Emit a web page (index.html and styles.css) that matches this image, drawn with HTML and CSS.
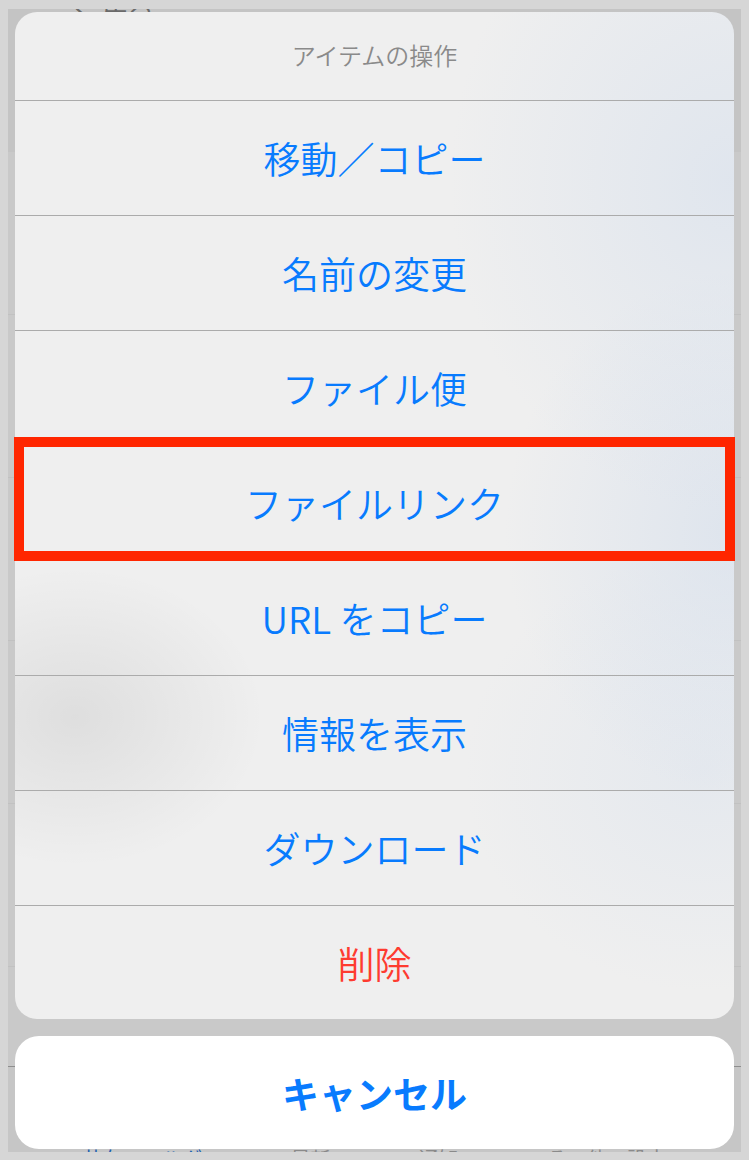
FILE: index.html
```html
<!DOCTYPE html>
<html lang="ja">
<head>
<meta charset="utf-8">
<title>アイテムの操作</title>
<link rel="stylesheet" href="styles.css">
</head>
<body>
<div class="frame">
  <div class="under">
    <div class="under-nav"><span class="under-back">く 戻る</span></div>
    <div class="under-list">
      <div class="under-row"></div>
      <div class="under-row"></div>
      <div class="under-row"></div>
      <div class="under-row"></div>
      <div class="under-row"></div>
    </div>
    <div class="under-tabs">
      <span class="tab tab-active">共有フォルダ</span>
      <span class="tab">最新</span>
      <span class="tab">通知</span>
      <span class="tab">その他の設定</span>
    </div>
  </div>

  <div class="overlay">
    <div class="sheet">
      <div class="sheet-title">アイテムの操作</div>
      <div class="sheet-row">移動／コピー</div>
      <div class="sheet-row">名前の変更</div>
      <div class="sheet-row">ファイル便</div>
      <div class="sheet-row">ファイルリンク</div>
      <div class="sheet-row">URL をコピー</div>
      <div class="sheet-row">情報を表示</div>
      <div class="sheet-row">ダウンロード</div>
      <div class="sheet-row sheet-row-danger">削除</div>
    </div>
    <div class="cancel">キャンセル</div>
  </div>

  <div class="highlight"></div>
</div>
</body>
</html>
```

FILE: styles.css
```css
html, body {
  margin: 0;
  padding: 0;
}

body {
  background: #d6d6d6;
  width: 749px;
  height: 1160px;
  overflow: hidden;
  font-family: "Noto Sans CJK JP", "Noto Sans", sans-serif;
}

.frame {
  position: relative;
  margin: 9px 8px 0 8px;
  height: 1143px;
  background: #c4c4c4;
  overflow: hidden;
}

/* dimmed page underneath */
.under {
  display: flex;
  flex-direction: column;
  height: 100%;
}

.under-nav {
  height: 143px;
  background: #c4c4c4;
}

.under-back {
  display: block;
  margin: -15px 0 0 62px;
  font-size: 26px;
  line-height: 26px;
  color: #6a6a6a;
}

.under-list {
  flex: 1;
  display: flex;
  flex-direction: column;
  background: #c9c9c9;
}

.under-row {
  height: 162px;
  border-bottom: 1px solid #c1c1c1;
}

.under-tabs {
  height: 85px;
  border-top: 1px solid #8e8e8e;
  background: #c6c6c6;
  display: flex;
  align-items: flex-end;
  justify-content: space-around;
  padding: 0 30px;
}

.tab {
  font-size: 20px;
  line-height: 20px;
  margin-bottom: -17px;
  color: #8a8a8a;
}

.tab-active {
  color: #2060b0;
}

/* action sheet overlay */
.overlay {
  position: absolute;
  left: 7px;
  top: 3px;
  width: 719px;
  display: flex;
  flex-direction: column;
  gap: 17px;
}

.sheet {
  border-radius: 22px;
  overflow: hidden;
  background:
    radial-gradient(ellipse 190px 150px at 60px 705px, rgba(0, 0, 0, 0.07), rgba(0, 0, 0, 0)),
    radial-gradient(ellipse 280px 330px at 715px 170px, rgba(205, 218, 236, 0.45), rgba(205, 218, 236, 0)),
    radial-gradient(ellipse 230px 260px at 720px 520px, rgba(205, 218, 236, 0.5), rgba(205, 218, 236, 0)),
    radial-gradient(ellipse 240px 220px at 690px 760px, rgba(205, 218, 236, 0.3), rgba(205, 218, 236, 0)),
    #efefef;
  display: flex;
  flex-direction: column;
}

.sheet-title {
  height: 88px;
  display: flex;
  align-items: center;
  justify-content: center;
  font-size: 24px;
  font-weight: 350;
  color: #8a8a8a;
  padding-bottom: 4px;
  box-sizing: border-box;
}

.sheet-row {
  height: 115px;
  border-top: 1px solid #ababab;
  box-sizing: border-box;
  display: flex;
  align-items: center;
  justify-content: center;
  font-size: 37px;
  font-weight: 350;
  color: #087bfe;
}

.sheet-row:last-child {
  height: 114px;
}

.sheet-row-danger {
  color: #fe3b30;
}

.cancel {
  height: 113px;
  border-radius: 24px;
  background: #ffffff;
  display: flex;
  align-items: center;
  justify-content: center;
  font-size: 37px;
  font-weight: 700;
  color: #087bfe;
}

/* annotation box */
.highlight {
  position: absolute;
  left: 6px;
  top: 428px;
  width: 721px;
  height: 124px;
  box-sizing: border-box;
  border: 10px solid #ff2600;
}
```
